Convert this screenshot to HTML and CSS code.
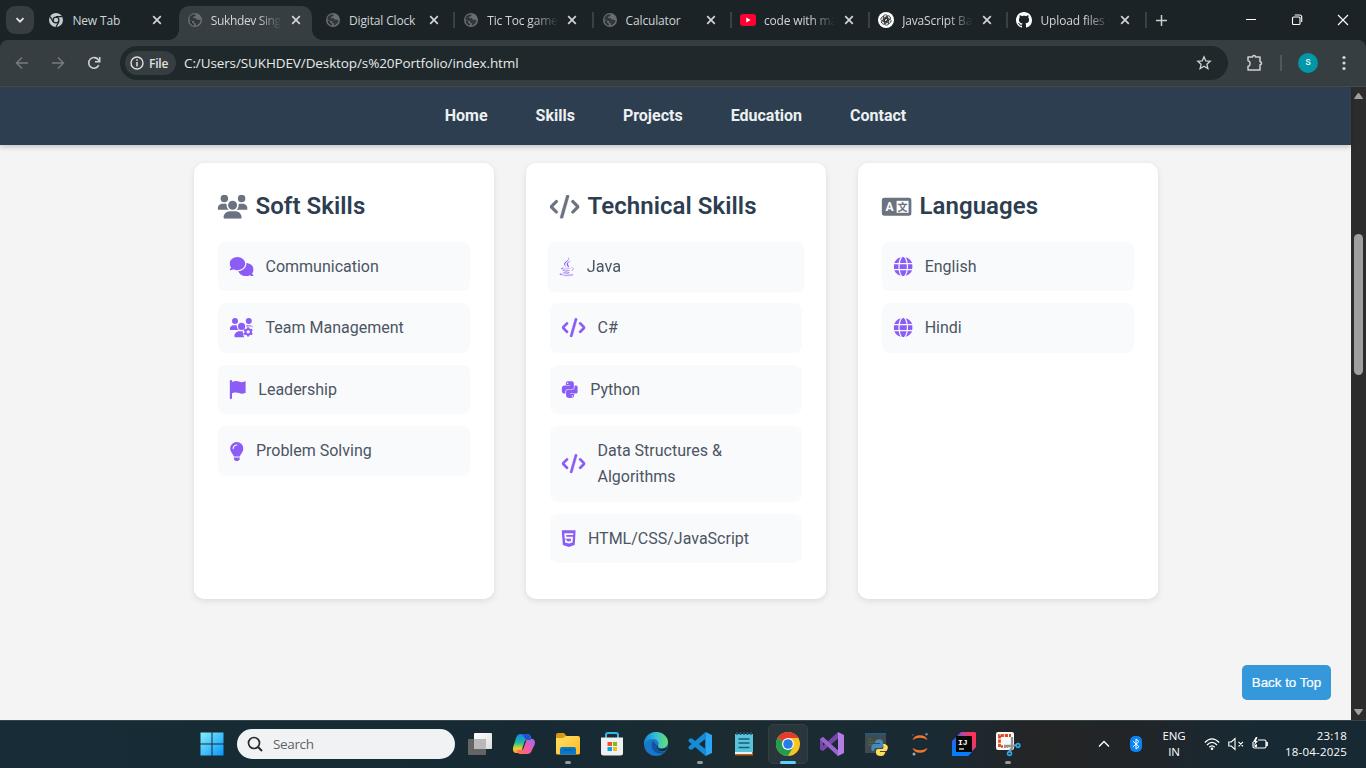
FILE: index.html
```html
<!DOCTYPE html>
<html lang="en">
<head>
<meta charset="utf-8">
<title>Sukhdev Singh Portfolio</title>
<link rel="stylesheet" href="styles.css">
</head>
<body>
<svg class="defs" aria-hidden="true">
  <symbol id="x" viewBox="0 0 10 10"><path d="M1.2 1.2l7.6 7.6M8.8 1.2l-7.6 7.6" stroke="currentColor" stroke-width="1.7" fill="none"/></symbol>
  <symbol id="earth" viewBox="0 0 14 14"><circle cx="7" cy="7" r="7" fill="#696e71"/><path d="M2 3.6Q3.5 1.5 6 1.2L7.8 1.8 7 3.3 5.2 3.7 5.1 5 7.8 5.3 8.7 6.6 11 6.7 12.7 7.5Q12 11 9 12.3L7.6 12.5 7.8 10.6 6 9.5 6.2 8.2 3.2 7.8 1.2 6.2Z" fill="#30383b"/><path d="M1.5 7.5L4 8.2 4.3 10 6 10.8 5.7 12.7Q2 11.6 1.5 7.5Z" fill="#252e31"/></symbol>
  <symbol id="code" viewBox="0 0 640 512"><path d="M392.800 1.200c-17-4.900-34.700 5-39.600 22l-128 448c-4.900 17 5 34.700 22 39.600s34.700-5 39.600-22l128-448c4.900-17-5-34.700-22-39.600zm80.600 120.100c-12.500 12.500-12.500 32.800 0 45.300L562.700 256l-89.400 89.400c-12.500 12.500-12.500 32.800 0 45.300s32.800 12.500 45.300 0l112-112c12.500-12.500 12.500-32.800 0-45.300l-112-112c-12.500-12.500-32.800-12.500-45.300 0zm-306.700 0c-12.500-12.500-32.800-12.500-45.300 0l-112 112c-12.500 12.500-12.500 32.800 0 45.300l112 112c12.500 12.500 32.800 12.500 45.300 0s12.500-32.800 0-45.300L77.300 256l89.400-89.400c12.500-12.500 12.500-32.800 0-45.300z"/></symbol>
  <symbol id="globe" viewBox="0 0 512 512"><path d="M352 256c0 22.200-1.200 43.600-3.300 64H163.300c-2.200-20.400-3.300-41.800-3.300-64s1.200-43.600 3.300-64H348.700c2.200 20.400 3.300 41.800 3.300 64zm28.800-64H503.900c5.300 20.500 8.100 41.900 8.100 64s-2.800 43.500-8.100 64H380.800c2.100-20.600 3.200-42 3.200-64s-1.100-43.400-3.200-64zm112.600-32H376.700c-10-63.900-29.800-117.400-55.300-151.600c78.300 20.700 142 77.500 171.900 151.600zm-149.100 0H167.700c6.100-36.400 15.500-68.600 27-94.700c10.500-23.600 22.200-40.700 33.500-51.500C239.400 3.200 248.700 0 256 0s16.600 3.200 27.800 13.800c11.300 10.800 23 27.900 33.500 51.500c11.600 26 20.900 58.200 27 94.700zm-209 0H18.600C48.600 85.900 112.200 29.100 190.600 8.400C165.100 42.600 145.300 96.100 135.300 160zM8.100 192H131.200c-2.100 20.600-3.200 42-3.200 64s1.100 43.400 3.200 64H8.100C2.800 299.500 0 278.100 0 256s2.800-43.500 8.100-64zM194.700 446.600c-11.600-26-20.900-58.200-27-94.600H344.300c-6.100 36.400-15.500 68.600-27 94.600c-10.500 23.600-22.200 40.700-33.500 51.500C272.600 508.800 263.300 512 256 512s-16.600-3.200-27.800-13.800c-11.300-10.800-23-27.900-33.500-51.500zM135.300 352c10 63.900 29.800 117.400 55.300 151.600C112.200 482.900 48.600 426.100 18.600 352H135.300zm358.100 0c-30 74.100-93.600 130.900-171.900 151.600c25.500-34.200 45.200-87.700 55.300-151.600H493.400z"/></symbol>
</svg>

<header class="tabstrip">
  <button class="tab-search"><svg width="10" height="10" viewBox="0 0 10 10"><path d="M1.500 3.200L5 6.700 8.500 3.200" stroke="#e3e6e7" stroke-width="1.800" fill="none"/></svg></button>
  <div class="tab">
    <svg class="fav" viewBox="0 0 14 14"><circle cx="7" cy="7" r="7" fill="#c3cbce"/><circle cx="7" cy="7" r="2.900" fill="#c3cbce" stroke="#1b2326" stroke-width="1.300"/><path d="M7 3.600h6M4.100 8.700L1.200 3.600M10 8.700L7 13.800" stroke="#1b2326" stroke-width="1.200"/></svg>
    <span class="tab-title">New Tab</span><svg class="close"><use href="#x"/></svg>
  </div>
  <div class="tab active">
    <svg class="fav"><use href="#earth"/></svg>
    <span class="tab-title">Sukhdev Sing</span><svg class="close"><use href="#x"/></svg>
  </div>
  <div class="tab sep"><svg class="fav"><use href="#earth"/></svg><span class="tab-title">Digital Clock</span><svg class="close"><use href="#x"/></svg></div>
  <div class="tab sep"><svg class="fav"><use href="#earth"/></svg><span class="tab-title">Tic Toc game</span><svg class="close"><use href="#x"/></svg></div>
  <div class="tab sep"><svg class="fav"><use href="#earth"/></svg><span class="tab-title">Calculator</span><svg class="close"><use href="#x"/></svg></div>
  <div class="tab sep">
    <svg class="fav big" viewBox="0 0 16 16"><rect y="2" width="16" height="12" rx="3" fill="#ff0033"/><path d="M6.300 5.500v5L10.600 8z" fill="#fff"/></svg>
    <span class="tab-title">code with ma</span><svg class="close"><use href="#x"/></svg>
  </div>
  <div class="tab sep">
    <svg class="fav big" viewBox="0 0 16 16"><circle cx="8" cy="8" r="8" fill="#fff"/><g fill="none" stroke="#252525" stroke-width=".8"><rect id="petal" x="5.300" y="2.800" width="4.300" height="6.800" rx="2.100"/><use href="#petal" transform="rotate(60 8 8)"/><use href="#petal" transform="rotate(120 8 8)"/><use href="#petal" transform="rotate(180 8 8)"/><use href="#petal" transform="rotate(240 8 8)"/><use href="#petal" transform="rotate(300 8 8)"/></g></svg>
    <span class="tab-title">JavaScript Ba</span><svg class="close"><use href="#x"/></svg>
  </div>
  <div class="tab sep">
    <svg class="fav big" viewBox="0 0 16 16"><path fill="#fff" d="M8 0C3.580 0 0 3.580 0 8c0 3.540 2.290 6.530 5.470 7.590.4.070.55-.17.55-.38 0-.19-.01-.82-.01-1.490-2.010.37-2.530-.49-2.690-.94-.09-.23-.48-.94-.82-1.130-.28-.15-.68-.52-.01-.53.63-.01 1.080.58 1.230.82.720 1.210 1.870.87 2.330.66.070-.52.28-.87.510-1.070-1.780-.2-3.640-.89-3.640-3.950 0-.87.310-1.590.82-2.150-.08-.2-.36-1.020.08-2.120 0 0 .67-.21 2.200.82.640-.18 1.320-.27 2-.27s1.360.09 2 .27c1.530-1.040 2.200-.82 2.200-.82.44 1.100.16 1.920.08 2.120.510.56.82 1.270.82 2.150 0 3.070-1.870 3.750-3.650 3.950.29.25.54.73.54 1.480 0 1.070-.01 1.930-.01 2.200 0 .21.150.46.550.38A8.010 8.010 0 0016 8c0-4.420-3.580-8-8-8z"/></svg>
    <span class="tab-title">Upload files ·</span><svg class="close"><use href="#x"/></svg>
  </div>
  <button class="new-tab"><svg width="11" height="11" viewBox="0 0 11 11"><path d="M5.500 0v11M0 5.500h11" stroke="#c9cecf" stroke-width="1.500"/></svg></button>
  <div class="win-controls">
    <svg viewBox="0 0 12 12"><path d="M1 5.500h10" stroke="#fff"/></svg>
    <svg viewBox="0 0 12 12"><g fill="none" stroke="#fff" stroke-width="1.100"><rect x="1.500" y="3" width="7.500" height="7.500" rx="1"/><path d="M3.700 1h5q2 0 2 2v5"/></g></svg>
    <svg viewBox="0 0 12 12"><path d="M1 1l10 10M11 1L1 11" stroke="#fff" stroke-width="1.100"/></svg>
  </div>
</header>

<div class="toolbar">
  <div class="nav-buttons">
    <svg viewBox="0 0 16 16"><path d="M14 8H3M8 2.500L2.500 8 8 13.500" stroke="#757b7d" stroke-width="1.500" fill="none"/></svg>
    <svg viewBox="0 0 16 16"><path d="M2 8h11M8 2.500L13.500 8 8 13.500" stroke="#757b7d" stroke-width="1.500" fill="none"/></svg>
    <svg viewBox="0 0 16 16"><path d="M12.800 10.200A5.300 5.300 0 1 1 12.500 5L13.300 6" stroke="#cdd2d3" stroke-width="1.600" fill="none"/><path d="M13.700 2v4.700H9" stroke="#cdd2d3" stroke-width="1.600" fill="none"/></svg>
  </div>
  <div class="omnibox">
    <span class="chip"><svg width="14" height="14" viewBox="0 0 14 14"><circle cx="7" cy="7" r="6" fill="none" stroke="#dde0e1" stroke-width="1.400"/><path d="M7 3.300v1.500M7 6v4.500" stroke="#dde0e1" stroke-width="1.500"/></svg>File</span>
    <span class="url">C:/Users/SUKHDEV/Desktop/s%20Portfolio/index.html</span>
    <svg class="star" width="16" height="16" viewBox="0 0 16 16"><path d="M8 1.800l1.800 4.100 4.400.4-3.300 2.900 1 4.400L8 11.300l-3.900 2.300 1-4.400-3.300-2.900 4.400-.4z" fill="none" stroke="#cfd2d2" stroke-width="1.300"/></svg>
  </div>
  <div class="tools">
    <svg width="18" height="18" viewBox="0 0 18 18"><path d="M2 3h4.500a1.500 1.500 0 0 1 3 0H14v4.800a1.500 1.500 0 0 1 0 3V16H2v-3.500c2.800-1 2.800-5 0-6z" fill="none" stroke="#cdd2d3" stroke-width="1.500" stroke-linejoin="round"/></svg>
    <i></i>
    <span class="avatar">s</span>
    <svg class="menu" width="4" height="16" viewBox="0 0 4 16" fill="#d3d7d8"><circle cx="2" cy="2.500" r="1.600"/><circle cx="2" cy="8" r="1.600"/><circle cx="2" cy="13.500" r="1.600"/></svg>
  </div>
</div>

<div class="viewport">
  <div class="page">
    <nav class="site-nav"><a>Home</a><a>Skills</a><a>Projects</a><a>Education</a><a>Contact</a></nav>
    <main class="cards">
      <section class="card">
        <h2><svg width="30" height="24" viewBox="0 0 640 512"><path d="M144 0a80 80 0 1 1 0 160A80 80 0 1 1 144 0zM512 0a80 80 0 1 1 0 160A80 80 0 1 1 512 0zM0 298.700C0 239.800 47.800 192 106.700 192h42.700c15.900 0 31 3.500 44.600 9.700c-1.300 7.200-1.900 14.700-1.900 22.300c0 38.200 16.800 72.500 43.300 96H21.300C9.600 320 0 310.400 0 298.700zM405.300 320c26.600-23.500 43.300-57.800 43.300-96c0-7.600-.7-15-1.900-22.300c13.600-6.300 28.700-9.700 44.600-9.700h42.700C592.200 192 640 239.800 640 298.700c0 11.800-9.600 21.300-21.300 21.300zM224 224a96 96 0 1 1 192 0 96 96 0 1 1-192 0zM128 485.300C128 411.700 187.700 352 261.300 352H378.700C452.300 352 512 411.700 512 485.300c0 14.700-11.900 26.700-26.700 26.700H154.700c-14.700 0-26.700-11.900-26.700-26.700z"/></svg>Soft Skills</h2>
        <ul>
          <li><svg viewBox="0 0 640 512" width="24"><path d="M208 352c114.900 0 208-78.800 208-176S322.900 0 208 0S0 78.800 0 176c0 38.600 14.700 74.300 39.600 103.400c-3.500 9.400-8.700 17.700-14.200 24.700c-4.800 6.200-9.700 11-13.300 14.300c-1.800 1.600-3.300 2.900-4.300 3.700c-.5.4-.9.7-1.100.8l-.2.2C1 327.200-1.400 334.400.8 340.900S9.100 352 16 352c21.800 0 43.800-5.600 62.100-12.500c9.200-3.500 17.800-7.400 25.200-11.400C134.100 343.300 169.800 352 208 352zM448 176c0 112.300-99.100 196.900-216.500 207C255.800 457.400 336.400 512 432 512c38.200 0 73.900-8.700 104.700-23.900c7.500 4 16 7.900 25.200 11.400c18.300 6.900 40.300 12.500 62.100 12.500c6.900 0 13.100-4.500 15.200-11.100c2.100-6.600-.2-13.800-5.800-17.900l-.2-.2c-.2-.2-.6-.4-1.100-.8c-1-.8-2.500-2-4.300-3.700c-3.600-3.300-8.500-8.100-13.300-14.300c-5.500-7-10.700-15.400-14.200-24.700c24.900-29 39.600-64.700 39.600-103.400c0-92.800-84.900-168.900-192.600-175.500c.4 5.100.6 10.300.6 15.500z"/></svg>Communication</li>
          <li><svg viewBox="0 0 640 512" width="24"><path d="M144 0a80 80 0 1 1 0 160A80 80 0 1 1 144 0zM512 0a80 80 0 1 1 0 160A80 80 0 1 1 512 0zM0 298.700C0 239.800 47.800 192 106.700 192h42.700c15.900 0 31 3.500 44.600 9.700c-6 45 13 90 43.300 118.300H21.300C9.600 320 0 310.400 0 298.700zM224 224a96 96 0 1 1 192 0 96 96 0 1 1-192 0zM446 202c14-6.500 29-10 45-10h43c45 0 84 28 99 68-30-20-45-31-70-33-30-12-60-12-89 0-10 3-18 9-27 14zM128 485.300C128 411.700 187.700 352 261.300 352H355l-3 53 30 23-19 31 30 53H154.700c-14.700 0-26.700-11.900-26.700-26.700z"/><path fill-rule="evenodd" d="M470 246h52l8 34 27 14 33-10 28 47-24 24v31l24 24-28 47-33-10-27 14-8 35h-52l-8-35-27-14-33 10-28-47 24-24v-31l-24-24 28-47 33 10 27-14zm26 79a45 45 0 1 0 .1 90 45 45 0 0 0-.1-90z"/></svg>Team Management</li>
          <li><svg viewBox="0 0 448 512" width="16.800"><path d="M64 32C64 14.300 49.700 0 32 0S0 14.300 0 32V480c0 17.700 14.300 32 32 32s32-14.300 32-32V352l64.300-16.100c41.100-10.300 84.600-5.500 122.500 13.400c44.200 22.100 95.500 24.800 141.700 7.400l34.700-13c12.500-4.700 20.800-16.600 20.800-30V66.100c0-23-24.200-38-44.800-27.700l-9.600 4.800c-46.300 23.200-100.800 23.200-147.100 0c-35.100-17.600-75.400-22-113.500-12.500L64 48z"/></svg>Leadership</li>
          <li><svg viewBox="0 0 384 512" width="14.400"><path d="M272 384c9.600-31.900 29.500-59.100 49.200-86.200c5.200-7.100 10.400-14.200 15.400-21.400c19.800-28.500 31.400-63 31.400-100.300C368 78.800 289.200 0 192 0S16 78.800 16 176c0 37.300 11.600 71.900 31.400 100.300c5 7.200 10.200 14.300 15.400 21.400c19.800 27.100 39.700 54.400 49.200 86.200zM192 512c44.200 0 80-35.800 80-80V416H112v16c0 44.200 35.800 80 80 80zM112 176c0 8.800-7.200 16-16 16s-16-7.200-16-16c0-61.900 50.100-112 112-112c8.800 0 16 7.200 16 16s-7.200 16-16 16c-44.200 0-80 35.800-80 80z"/></svg>Problem Solving</li>
        </ul>
      </section>
      <section class="card">
        <h2><svg class="bold" width="30" height="24"><use href="#code"/></svg>Technical Skills</h2>
        <ul>
          <li class="hovered"><svg viewBox="0 0 384 512" width="14.400"><path d="M277.740 312.900c9.800-6.700 23.400-12.500 23.400-12.500s-38.700 7-77.200 10.200c-47.100 3.900-97.700 4.700-123.100 1.300-60.100-8 33-30.100 33-30.100s-36.100-2.400-80.600 19c-52.500 25.400 130 37 224.500 12.100zm-85.400-32.100c-19-42.700-83.100-80.200 0-145.800C296 53.200 242.840 0 242.840 0c21.500 84.500-75.600 110.100-110.700 162.600-23.900 35.900 11.700 74.400 60.200 118.200zm114.600-176.200c.1 0-175.200 43.800-91.500 140.200 24.700 28.400-6.500 54-6.500 54s62.700-32.400 33.900-72.900c-26.900-37.800-47.500-56.600 64.100-121.300zm-6.100 270.500a12.190 12.190 0 0 1-2 2.600c128.300-33.700 81.100-118.900 19.800-97.300a17.330 17.330 0 0 0-8.200 6.300 70.450 70.450 0 0 1 11-3c31-6.500 75.500 41.500-20.600 91.400zM348 437.400s14.500 11.900-15.900 21.200c-57.900 17.500-240.800 22.800-291.600.7-18.300-7.900 16-19 26.800-21.300 11.200-2.400 17.700-2 17.700-2-20.300-14.300-131.300 28.100-56.400 40.200C232.840 509.400 401 461.300 348 437.400zM124.440 396c-78.700 22 47.900 67.400 148.100 24.500a185.890 185.890 0 0 1-28.200-13.800c-44.700 8.500-65.400 9.100-106 4.500-33.500-3.800-13.900-15.200-13.900-15.200zm179.800 97.200c-78.700 14.800-175.800 13.100-233.300 3.600 0-.1 11.800 9.700 72.400 13.600 92.200 5.900 233.800-3.300 237.100-46.900 0 0-6.400 16.500-76.200 29.700zM260.640 353c-59.200 11.400-93.500 11.100-136.800 6.600-33.500-3.500-11.600-19.700-11.600-19.700-86.800 28.800 48.200 61.400 169.500 25.900a60.370 60.370 0 0 1-21.100-12.800z"/></svg>Java</li>
          <li><svg class="bold" width="24"><use href="#code"/></svg>C#</li>
          <li><svg viewBox="0 0 448 512" width="16.800"><path d="M439.800 200.500c-7.700-30.900-22.300-54.200-53.400-54.200h-40.100v47.400c0 36.800-31.200 67.800-66.800 67.800H172.700c-29.200 0-53.400 25-53.400 54.300v101.800c0 29 25.200 46 53.400 54.300 33.800 9.900 66.300 11.700 106.800 0 26.900-7.800 53.400-23.500 53.400-54.300v-40.700H226.200v-13.600h160.200c31.100 0 42.600-21.700 53.400-54.200 11.200-33.500 10.700-65.700 0-108.600zM286.200 404c11.100 0 20.100 9.100 20.100 20.300 0 11.300-9 20.400-20.100 20.400-11 0-20.100-9.200-20.100-20.400.1-11.300 9.100-20.300 20.100-20.300zM167.800 248.100h106.800c29.700 0 53.400-24.500 53.400-54.300V91.900c0-29-24.400-50.700-53.400-55.600-35.800-5.900-74.700-5.600-106.800.1-45.200 8-53.400 24.700-53.400 55.600v40.700h106.900v13.600h-147c-31.100 0-58.300 18.700-66.800 54.200-9.800 40.700-10.200 66.100 0 108.600 7.600 31.600 25.700 54.200 56.800 54.200H101v-48.800c0-35.300 30.500-66.400 66.800-66.400zm-6.700-142.600c-11.100 0-20.100-9.100-20.100-20.300.1-11.300 9-20.400 20.100-20.400 11 0 20.100 9.200 20.100 20.400s-9 20.300-20.100 20.300z"/></svg>Python</li>
          <li><svg class="bold" width="24"><use href="#code"/></svg><span>Data Structures &amp; Algorithms</span></li>
          <li><svg viewBox="0 0 384 512" width="14.400"><path d="M0 32l34.900 395.800L191.500 480l157.600-52.200L384 32H0zm308.200 127.900H124.400l4.100 49.400h175.600l-13.600 148.400-97.900 27v.3h-1.100l-98.700-27.300-6-75.800h47.700L138 320l53.500 14.500 53.700-14.500 6-62.200H84.300L71.500 112.200h241.100l-4.400 47.700z"/></svg>HTML/CSS/JavaScript</li>
        </ul>
      </section>
      <section class="card">
        <h2><svg width="30" height="24" viewBox="0 0 30 24"><rect y="3" width="30" height="18" rx="3"/><rect x="15" y="6" width="12" height="12" fill="#fff"/><text x="8" y="16" text-anchor="middle" class="lang-latin">A</text><text x="21" y="15.800" text-anchor="middle" class="lang-cjk">文</text></svg>Languages</h2>
        <ul>
          <li><svg width="19.200"><use href="#globe"/></svg>English</li>
          <li><svg width="19.200"><use href="#globe"/></svg>Hindi</li>
        </ul>
      </section>
    </main>
    <button class="to-top">Back to Top</button>
  </div>
  <div class="scrollbar">
    <svg width="9" height="8" viewBox="0 0 9 8"><path d="M4.500 1L8.500 6.500h-8z" fill="#9f9f9f" stroke="#9f9f9f" stroke-linejoin="round"/></svg>
    <div class="thumb"></div>
    <svg class="down" width="9" height="8" viewBox="0 0 9 8"><path d="M4.500 7L.5 1.500h8z" fill="#9f9f9f" stroke="#9f9f9f" stroke-linejoin="round"/></svg>
  </div>
</div>

<footer class="taskbar">
  <div class="app start"><svg viewBox="0 0 24 24"><defs><linearGradient id="win" x2="1" y2="1"><stop stop-color="#85efff"/><stop offset="1" stop-color="#0796f8"/></linearGradient></defs><path d="M.5.500h11v11H.5zM12.500.500h11v11h-11zM.5 12.500h11v11H.5zM12.500 12.500h11v11h-11z" fill="url(#win)"/></svg></div>
  <div class="search"><svg width="16" height="16" viewBox="0 0 16 16"><circle cx="7" cy="7" r="5.500" fill="none" stroke="#252a2e" stroke-width="1.700"/><path d="M11 11l4 4" stroke="#252a2e" stroke-width="2"/></svg>Search</div>
  <div class="app"><svg viewBox="0 0 24 24"><defs><linearGradient id="tv" x2="1" y2="1"><stop stop-color="#fff"/><stop offset="1" stop-color="#ddd"/></linearGradient></defs><rect x="6" y="1" width="18" height="16" rx="1" fill="url(#tv)"/><rect y="7" width="18" height="16" rx="1" fill="#646464"/><path d="M6 7h11q1 0 1 1v9H6z" fill="#b9b9b9"/></svg></div>
  <div class="app"><svg viewBox="0 0 24 24"><defs><linearGradient id="cpa" x2="0" y2="1"><stop stop-color="#1683ec"/><stop offset=".45" stop-color="#1bbd9c"/><stop offset=".75" stop-color="#e5d12e"/><stop offset="1" stop-color="#ff9b28"/></linearGradient><linearGradient id="cpb" x1="1" x2="0" y2="1"><stop stop-color="#9b69f6"/><stop offset=".5" stop-color="#f05baa"/><stop offset="1" stop-color="#ff7440"/></linearGradient></defs><path d="M12 2h4q2 0 2.700 2.500l1 3.500H15q-2 0-2.600 2L9.500 19Q9 21 7 21H3.500Q0 20 1.300 14.500L4 6q1.200-4 5-4z" fill="url(#cpa)"/><path d="M12 22H8q-2 0-2.500-2l-.4-2h4q2 0 2.500-2l2.500-7q.6-2 2.600-2h4q3 1 2 5.500L20 18q-1.200 4-5 4z" fill="url(#cpb)"/><path d="M8 2h7q3 0 4 6h-4q-2 0-3-3-1-3-4-3z" fill="#2450ce"/></svg></div>
  <div class="app open"><svg viewBox="0 0 24 24"><defs><linearGradient id="fo" x2="1" y2="1"><stop stop-color="#ffe16b"/><stop offset="1" stop-color="#ffb81d"/></linearGradient></defs><path d="M0 3q0-2 2-2h6l2.500 3H20v5H0z" fill="#d69a10"/><path d="M0 6h7l3-2h12q2 0 2 2v15q0 1.500-1.500 1.500h-21Q0 22.500 0 21z" fill="url(#fo)"/><path d="M4 22.500V17q0-2 2-2h12q2 0 2 2v5.500z" fill="#0878c9"/><path d="M7.500 18h9" stroke="#07599b"/></svg></div>
  <div class="app"><svg viewBox="0 0 24 24"><path d="M6 7V3q0-2 2-2h8q2 0 2 2v4" fill="none" stroke="#38b6e7" stroke-width="2"/><path d="M1 5.500h22V21q0 2.500-2.500 2.500h-17Q1 23.500 1 21z" fill="#f0f0f0"/><path d="M7.500 10H12v4H7.500z" fill="#ed5229"/><path d="M13 10h4v4h-4z" fill="#80bb17"/><path d="M7.500 15H12v4H7.500z" fill="#00a5e8"/><path d="M13 15h4v4h-4z" fill="#fdb916"/></svg></div>
  <div class="app"><svg viewBox="0 0 24 24"><defs><linearGradient id="ed" x2="1"><stop stop-color="#1686d7"/><stop offset=".5" stop-color="#34bfd7"/><stop offset="1" stop-color="#66df6c"/></linearGradient></defs><circle cx="12" cy="12" r="12" fill="#1778ca"/><path d="M0 11C1 4 6 0 12 0c7 0 12 5 12 10 0 4-3 6.500-6.500 6.500-3 0-4.500-1.500-3.500-3 2-3-1-6.500-5-6.500-4 0-8 3-9 6z" fill="url(#ed)"/><path d="M9 9c-3 4-1 10 4 12 3 1.200 6 .5 8.500-1.500-4 1-9-1-8.500-6z" fill="#13539f"/><path d="M14 13.500c-.7 2 1 3.200 3.500 3.200 2.500 0 4.800-1 5.900-2.500-.5 2-1.300 3.500-2.200 4.500-4 1.500-9-1-8-5.500z" fill="#182c32"/></svg></div>
  <div class="app open"><svg viewBox="0 0 24 24"><path d="M17.500 0v24L1 9.700q-1.500-1.200 0-2.500l1-.7q1-.7 2 0L18 17.500V6.500L4 17.500q-1 .7-2 0l-1-.8q-1.500-1.200 0-2.500z" fill="#168bd7"/><path d="M17.500 0L24 3v18l-6.500 3z" fill="#29a6f5"/></svg></div>
  <div class="app"><svg viewBox="0 0 24 24"><rect x="3" y="2" width="18" height="20" fill="#59c3db"/><path d="M3 20h18v3.500H3z" fill="#b4631f"/><path d="M3 20h17v2H3z" fill="#eee"/><path d="M5 0v3M8.500 0v3M12 0v3M15.500 0v3M19 0v3" stroke="#1b6079" stroke-width="1.500"/><path d="M6.500 7h11M6.500 11h11M6.500 15.500h11" stroke="#146078" stroke-width="1.600"/></svg></div>
  <div class="app focused"><svg viewBox="0 0 24 24"><circle cx="12" cy="12" r="12" fill="#fbc51f"/><path d="M12 12L1.600 6A12 12 0 0 1 22.400 6z" fill="#e53b2e"/><path d="M1.600 6A12 12 0 0 0 12 24l5.200-9L12 12z" fill="#259b50"/><path d="M12 6h10.400L17 15z" fill="#fbc51f"/><circle cx="12" cy="12" r="6" fill="#fff"/><circle cx="12" cy="12" r="4.800" fill="#287be8"/></svg></div>
  <div class="app"><svg viewBox="0 0 24 24"><path d="M0 6.500L3 5v14l-3-1.500z" fill="#7646aa"/><path d="M3 5l15 13.500V24L0 7.500z" fill="#8d5bc5"/><path d="M3 19l15-12.500V0L0 16.500z" fill="#7646aa"/><path d="M3 5l15 13.500V24L1 8z" fill="#9765cf"/><path d="M18 0l6 3v18l-6 3z" fill="#b27de6"/></svg></div>
  <div class="app"><svg viewBox="0 0 24 24"><path d="M1 1h21v20H1z" fill="#414a4c"/><path d="M1 1h21v2H1z" fill="#285879"/><path d="M4 7h3M4 10h6M4 13h4" stroke="#437549" stroke-width="1"/><path d="M12 8q4-1.500 6 0 1 1 1 3v3q0 2-2 2h-5q-2 0-2 3H8q-2-4 1-7h7v-1h-5q0-2 1-3z" fill="#4389bd"/><path d="M19 12h2q5 2 1.500 7H16v1h5q0 4-4 4-5 0-5-3v-2q0-2 2-2h4q1.500 0 1.500-2z" fill="#ffdc59"/></svg></div>
  <div class="app"><svg viewBox="0 0 24 24"><path d="M4.500 8Q6 3.200 12 3.200T19.500 8Q12 3.500 4.500 8zM4.500 16Q6 20.800 12 20.800t7.500-4.800Q12 20.500 4.500 16z" fill="#f47726"/><circle cx="18.500" cy="2.200" r="1.200" fill="#898989"/><circle cx="6" cy="22" r="1.500" fill="#aaa"/><circle cx="5" cy="3" r=".7" fill="#777"/></svg></div>
  <div class="app"><svg viewBox="0 0 24 24"><defs><linearGradient id="jet" x1="0" y1=".7" x2="1" y2=".2"><stop stop-color="#007eff"/><stop offset=".35" stop-color="#4a54d8"/><stop offset=".6" stop-color="#b34aa0"/><stop offset=".9" stop-color="#ff3158"/></linearGradient></defs><path d="M9 0h14l1 1v14l-8 9H0V9z" fill="url(#jet)"/><path d="M0 14l4 6h16l-4 4H0z" fill="#087cff"/><rect x="4" y="4" width="16" height="16" fill="#060606"/><text x="6" y="12.500" class="ij">IJ</text><path d="M7 17h5" stroke="#fff" stroke-width="1.200"/></svg></div>
  <div class="app open"><svg viewBox="0 0 24 24"><rect width="18" height="18" rx="2" fill="#fafafa"/><path d="M3.500 15V3.500H15" fill="none" stroke="#df4b20" stroke-width="2.800" stroke-dasharray="3.200 1"/><path d="M5 14.500h7" stroke="#df4b20" stroke-width="2.400" stroke-dasharray="2 1"/><path d="M16 5v11l-3 4M8 14h8l4-1" fill="none" stroke="#909497" stroke-width="2.300"/><g fill="none" stroke="#2da8e4" stroke-width="1.700"><circle cx="22" cy="13.500" r="1.800"/><circle cx="13.500" cy="21.500" r="1.900"/></g></svg></div>
  <div class="tray">
    <svg class="chev" width="12" height="8" viewBox="0 0 12 8"><path d="M1 6.500l5-5 5 5" fill="none" stroke="#fff" stroke-width="1.400"/></svg>
    <svg class="bt" width="12" height="16" viewBox="0 0 12 16"><rect width="12" height="16" rx="5" fill="#0b84f3"/><path d="M3 5.200l6 5.500L6 13V3l3 2.500-6 5.300" fill="none" stroke="#fff" stroke-width="1"/></svg>
    <div class="lang">ENG<br>IN</div>
    <svg width="16" height="14" viewBox="0 0 16 14"><path d="M.8 5.500Q8-1.800 15.200 5.500M3 8Q8 2.900 13 8M5.300 10.200Q8 7.500 10.700 10.200" fill="none" stroke="#fff" stroke-width="1.300"/><circle cx="8" cy="11.700" r="1.300" fill="#fff"/></svg>
    <svg width="16" height="14" viewBox="0 0 16 14"><path d="M.8 5v4h2.500L7 12.500v-11L3.300 5zM10.500 4.800l4.500 4.500M15 4.800l-4.500 4.500" fill="none" stroke="#fff" stroke-width="1.100"/></svg>
    <svg width="16" height="14" viewBox="0 0 16 14"><path d="M6 3h6.500q1.500 0 1.500 1.500v5Q14 11 12.500 11h-10Q1 11 1 9.500V5M14.300 5.500h1v3h-1" fill="none" stroke="#fff" stroke-width="1.200"/><path d="M3.800 0L1 5h2L2 8.500 6 4H4L5.500 0zM2.500 10V8.300L5 7v3z" fill="#fff"/></svg>
    <div class="clock">23:18<br>18-04-2025</div>
  </div>
</footer>
</body>
</html>
```
FILE: styles.css
```css
* { box-sizing: border-box; }
body {
  margin: 0;
  width: 1366px;
  height: 768px;
  overflow: hidden;
  display: flex;
  flex-direction: column;
  font-family: "Open Sans", "Noto Sans", sans-serif;
  background: #1b2326;
}
svg { display: block; flex: none; }
button { border: 0; padding: 0; }
.defs { position: absolute; width: 0; height: 0; }

/* Browser tab strip */
.tabstrip { height: 40px; flex: none; display: flex; padding: 6px 0 0 6px; background: #1b2326; }
.tab-search { width: 28px; height: 28px; flex: none; border-radius: 9px; background: #373e41; display: grid; place-items: center; margin-right: 7.400px; }
.tab {
  width: 138.300px;
  height: 34px;
  flex: none;
  padding: 0 8px 6px;
  display: flex;
  align-items: center;
  position: relative;
  color: #d0d5d7;
  font-size: 12px;
}
.fav { width: 14px; height: 14px; margin-right: 9px; }
.fav.big { width: 16px; height: 16px; margin: 0 8px 0 -1px; }
.tab-title {
  width: 71px;
  margin-right: 9px;
  overflow: hidden;
  white-space: nowrap;
  letter-spacing: -.15px;
  -webkit-mask-image: linear-gradient(90deg, #000 46px, transparent 71px);
  mask-image: linear-gradient(90deg, #000 46px, transparent 71px);
}
.tab:nth-child(2) .tab-title, .tab:nth-child(4) .tab-title, .tab:nth-child(6) .tab-title { -webkit-mask-image: none; mask-image: none; }
.active .tab-title { letter-spacing: -.35px; }
.close { width: 10px; height: 10px; }
.sep::after { content: ""; position: absolute; right: 1px; top: 6px; width: 2px; height: 16px; background: #394144; }
.active { z-index: 1; }
.active::before {
  content: "";
  position: absolute;
  z-index: -1;
  inset: 0 6px 0 -1px;
  border-radius: 10px 10px 0 0;
  background: #373e41;
}
.active::after {
  content: "";
  position: absolute;
  z-index: -1;
  left: -11px;
  right: -4px;
  bottom: 0;
  height: 10px;
  background:
    radial-gradient(circle at 0 0, transparent 9.500px, #373e41 10px) left / 10px 10px no-repeat,
    radial-gradient(circle at 100% 0, transparent 9.500px, #373e41 10px) right / 10px 10px no-repeat;
}
.new-tab { width: 28px; height: 28px; flex: none; background: none; display: grid; place-items: center; }
.win-controls { margin-left: auto; display: flex; gap: 34px; padding: 8px 17px 0 0; }
.win-controls svg { width: 12px; height: 12px; }

/* Address bar row */
.toolbar {
  height: 47px;
  flex: none;
  display: flex;
  align-items: flex-start;
  padding-top: 6px;
  background: #373e41;
  border-bottom: 1px solid #484b4a;
  border-radius: 8px 8px 0 0;
}
.nav-buttons { display: flex; gap: 20px; padding: 9px 18px 0 14px; }
.nav-buttons svg { width: 16px; height: 16px; }
.omnibox { width: 1108px; height: 34px; border-radius: 17px; background: #1f282b; display: flex; align-items: center; padding: 0 16px 0 5px; }
.chip { width: 51px; height: 24px; border-radius: 12px; background: #373e41; color: #e0e3e4; font-size: 12px; font-weight: 600; display: flex; align-items: center; gap: 5px; padding-left: 5px; letter-spacing: -.2px; }
.url { margin-left: 8px; color: #e8eaea; font-size: 13.500px; letter-spacing: -.11px; white-space: nowrap; }
.star { margin-left: auto; }
.tools { display: flex; align-items: center; height: 34px; padding-left: 18px; }
.tools i { width: 2px; height: 16px; background: #51585a; margin: 0 16px; }
.avatar { width: 20px; height: 20px; border-radius: 50%; background: #0097a7; color: #fff; font: 11px/18px Roboto, sans-serif; text-align: center; }
.menu { margin-left: 24px; }

/* Page area */
.viewport { height: 633px; flex: none; display: flex; }
.page { width: 1351px; background: #f4f4f4; position: relative; font-family: Roboto, sans-serif; line-height: 1.6; }
.site-nav {
  height: 58px;
  display: flex;
  justify-content: center;
  align-items: center;
  gap: 48px;
  background: #2c3e50;
  box-shadow: 0 2px 5px rgba(0, 0, 0, .2);
  color: #ecf0f1;
  font-size: 16px;
  font-weight: 700;
}
.cards { display: flex; justify-content: center; gap: 32px; padding-top: 18px; }
.card { width: 300px; height: 436px; padding: 24px; border-radius: 10px; background: #fff; box-shadow: 0 2px 6px rgba(0, 0, 0, .1); }
.card h2 { margin: 0 0 16.200px; display: flex; align-items: center; gap: 8px; font-size: 24px; line-height: 38.400px; font-weight: 600; letter-spacing: .06px; color: #2c3e50; }
.card h2 svg { fill: #6b7280; transform: translate(-.4px, .8px); }
.card h2 .lang-latin { fill: #fff; font: 700 12px Roboto, sans-serif; }
.card h2 .lang-cjk { font: 700 10px "Noto Sans CJK SC", sans-serif; }
.card ul { list-style: none; margin: 0; padding: 0; display: flex; flex-direction: column; gap: 12px; }
.card li { display: flex; align-items: center; gap: 12px; padding: 12px; border-radius: 8px; background: #f9fafb; color: #4b5563; font-size: 16px; line-height: 25.600px; }
.card li svg { height: 19.200px; fill: #8b5cf6; transform: translateX(-.4px); }
.card li.hovered { transform: scale(1.02); }
.card h2 svg.bold { stroke: #6b7280; stroke-width: 6; }
.card li svg.bold { stroke: #8b5cf6; stroke-width: 8; }
.to-top { position: absolute; right: 20px; bottom: 20px; width: 89px; height: 35px; border-radius: 5px; background: #3498db; color: #fff; font: 13.333px "Liberation Sans", Arial, sans-serif; -webkit-text-stroke: .2px #fff; }
.scrollbar { width: 15px; background: #2c2c2c; display: flex; flex-direction: column; align-items: center; padding: 5px 0 4px; }
.thumb { width: 9px; height: 141px; margin-top: 134px; border-radius: 5px; background: #9f9f9f; }
.down { margin-top: auto; }

/* Windows taskbar */
.taskbar {
  height: 48px;
  flex: none;
  display: flex;
  align-items: center;
  padding-left: 189px;
  box-shadow: inset 0 1px #34444b;
  background: linear-gradient(90deg, #172c36 0, #172a34 40%, #1b2b30 55%, #192a34 68%, #242525 76%, #202529 84%, #172a33 92%);
}
.app { width: 44px; height: 40px; flex: none; display: grid; place-items: center; position: relative; }
.app svg { width: 24px; height: 24px; overflow: visible; }
.app.start { padding-left: 1px; }
.app.open::after, .app.focused::after { content: ""; position: absolute; left: 19px; bottom: 0; width: 6px; height: 3px; border-radius: 2px; background: #929b9e; }
.app.focused::before { content: ""; position: absolute; inset: 0 2px; border: 1px solid #344047; border-radius: 5px; background: #29363c; }
.app.focused svg { position: relative; }
.app.focused::after { left: 14px; width: 16px; background: #60cdff; }
.ij { font: 700 8px "Liberation Mono", monospace; fill: #fff; }
.search { width: 218px; height: 30px; margin: 0 3px 0 4px; border-radius: 15px; background: #f1f2f4; display: flex; align-items: center; gap: 10px; padding-left: 10px; color: #606366; font-size: 13.500px; letter-spacing: -.35px; }
.tray { margin-left: auto; padding-right: 19px; display: flex; align-items: center; color: #fff; font-size: 11.500px; line-height: 16px; gap: 8px; }
.chev { margin-right: 12px; }
.bt { margin-right: 10px; }
.lang { width: 28px; text-align: center; margin-right: 8px; letter-spacing: -.2px; }
.clock { width: 66px; margin-left: 5px; text-align: right; white-space: nowrap; letter-spacing: .2px; }
```
